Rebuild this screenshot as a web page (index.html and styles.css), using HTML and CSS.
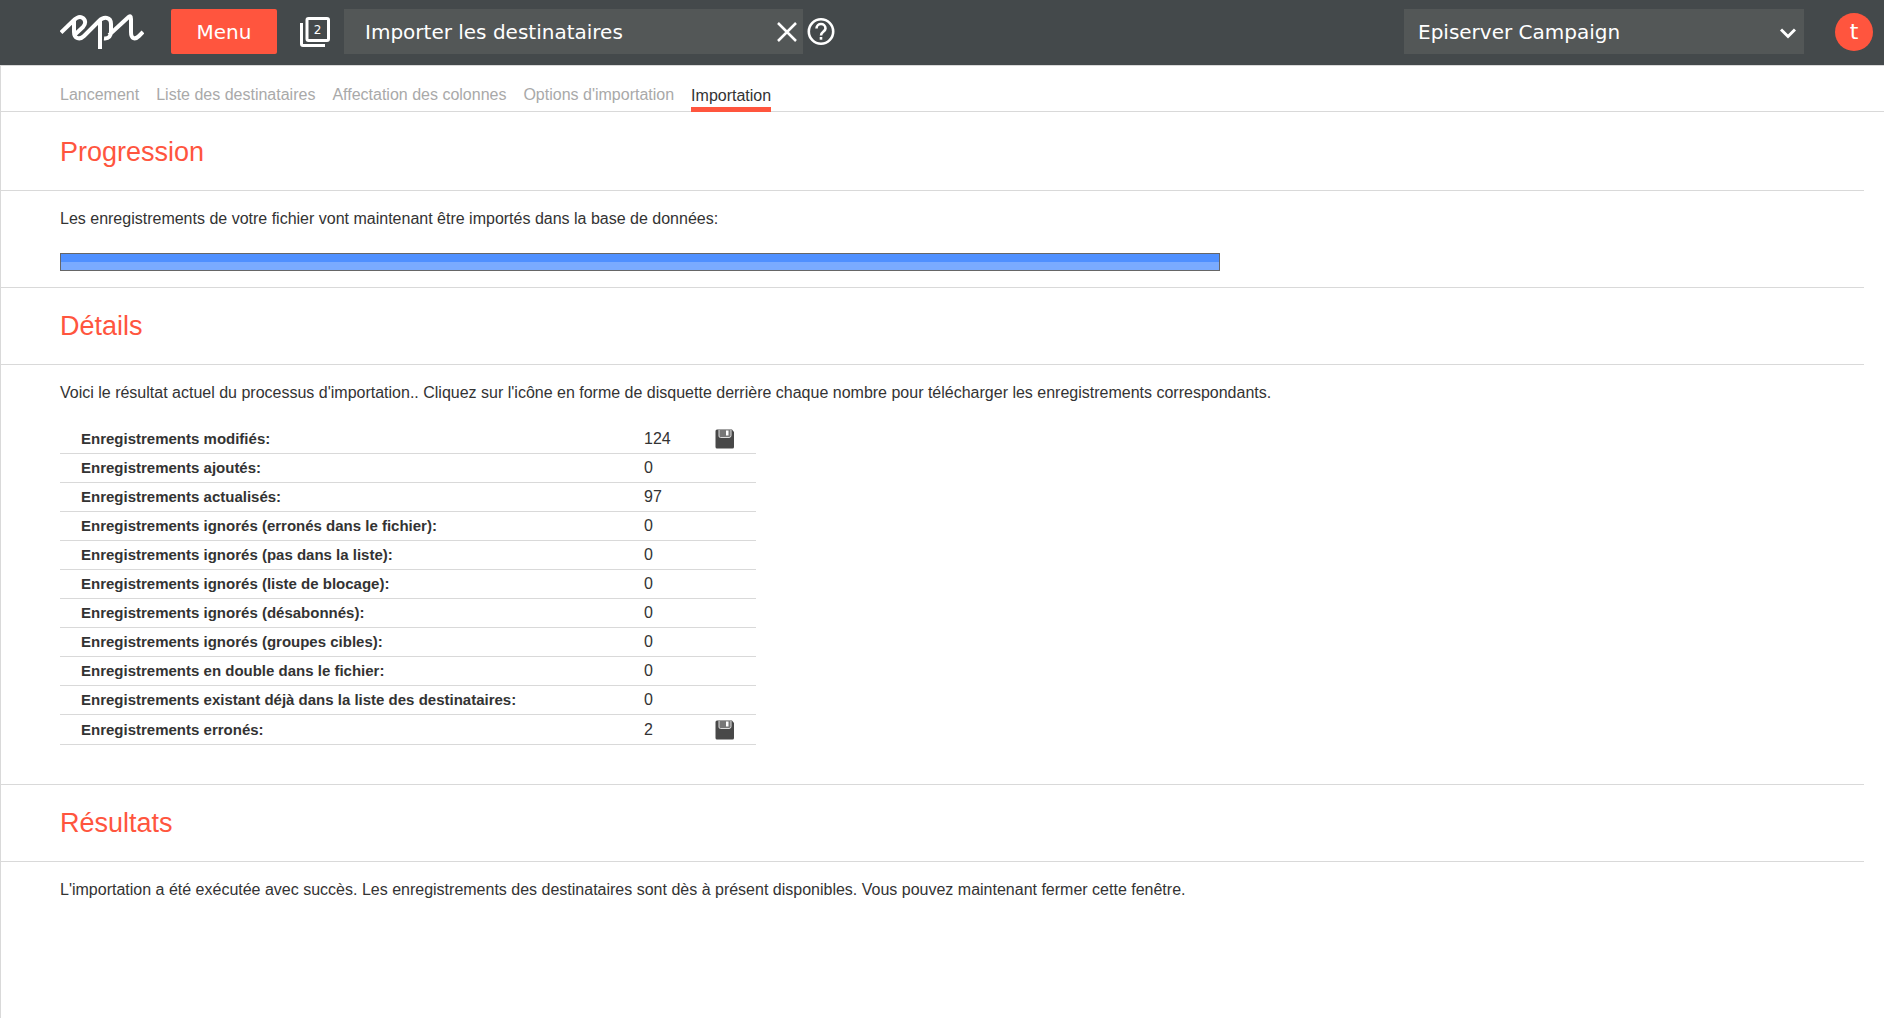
FILE: index.html
```html
<!DOCTYPE html>
<html lang="fr">
<head>
<meta charset="utf-8">
<meta name="viewport" content="width=device-width, initial-scale=1">
<title>Importer les destinataires</title>
<link rel="stylesheet" href="styles.css">
</head>
<body>
<header class="topbar">
  <a class="logo" href="#" aria-label="epi">
    <svg width="84" height="36" viewBox="0 0 84 36" fill="none" stroke="#fff" stroke-width="4">
      <path d="M1 18.500 L13 7 C16 4 19 2 22 3.500 C26 5.500 26 10 23 13 L15 20.500 M14 6.500 V18 C14 25 20 26 24 22 L39 7 C44 2 51 3 51 10 V17 C51 22 49 25 44 24.500 M40 6 V35 M49 21 L68 3.500 C70 1.500 71 2 71 5 V18 C71 25 75 26 79 22 L83 18"/>
    </svg>
  </a>
  <button class="menu" type="button">Menu</button>
  <button class="icon-button windows" type="button" aria-label="Fenêtres ouvertes">
    <svg width="30" height="30" viewBox="0 0 30 30" fill="none" stroke="#fff" stroke-width="3">
      <rect x="7" y="1.500" width="21.500" height="22" rx="1.500"/>
      <path d="M1.500 6 V27 Q1.500 28.500 3 28.500 H25"/>
    </svg>
    <span class="count">2</span>
  </button>
  <div class="window-title">
    <span>Importer les destinataires</span>
    <button class="icon-button" type="button" aria-label="Fermer">
      <svg width="20" height="20" viewBox="0 0 20 20" fill="none" stroke="#fff" stroke-width="2.500"><path d="M1 1 L19 19 M19 1 L1 19"/></svg>
    </button>
  </div>
  <button class="icon-button" type="button" aria-label="Aide">
    <svg width="28" height="28" viewBox="0 0 28 28" fill="none" stroke="#fff" stroke-width="2.600">
      <circle cx="14" cy="13.500" r="12.200"/>
      <path d="M9.500 10.500 C9.500 4.500 18.500 4.500 18.500 10.500 C18.500 13.500 14 13.500 14 17.500"/>
      <path d="M14 19 V21.700"/>
    </svg>
  </button>
  <div class="client">
    <select aria-label="Client"><option>Episerver Campaign</option></select>
    <svg class="chevron" width="16" height="11" viewBox="0 0 16 11" fill="none" stroke="#fff" stroke-width="3"><path d="M1 1.500 L8 8.500 L15 1.500"/></svg>
  </div>
  <button class="avatar" type="button">t</button>
</header>
<main class="page">
  <nav class="steps">
    <a href="#">Lancement</a>
    <a href="#">Liste des destinataires</a>
    <a href="#">Affectation des colonnes</a>
    <a href="#">Options d'importation</a>
    <a href="#" class="current" aria-current="step">Importation</a>
  </nav>
  <section class="panel">
    <h2>Progression</h2>
    <div class="body">
      <p id="progress-label">Les enregistrements de votre fichier vont maintenant être importés dans la base de données:</p>
      <progress max="100" value="100" aria-labelledby="progress-label"></progress>
    </div>
  </section>
  <section class="panel">
    <h2>Détails</h2>
    <div class="body details">
      <p>Voici le résultat actuel du processus d'importation.. Cliquez sur l'icône en forme de disquette derrière chaque nombre pour télécharger les enregistrements correspondants.</p>
      <table>
        <tr class="download"><th scope="row">Enregistrements modifiés:</th><td>124</td><td class="action"><button class="icon-button" type="button" aria-label="Télécharger les enregistrements modifiés"><svg width="20" height="20" viewBox="0 0 20 20"><path fill="#484848" d="M2 0.500 H17 L19 3 V18 Q19 19.500 17.500 19.500 H2 Q0.500 19.500 0.500 18 V2 Q0.500 0.500 2 0.500Z"/><path fill="#777" stroke="#ddd" d="M4 1 V7 Q4 8.500 5.500 8.500 H14 Q16 8.500 16 6.500 V1"/><path fill="#fff" d="M11 1.500 H13.500 V6.500 H11Z"/></svg></button></td></tr>
        <tr><th scope="row">Enregistrements ajoutés:</th><td>0</td><td></td></tr>
        <tr><th scope="row">Enregistrements actualisés:</th><td>97</td><td></td></tr>
        <tr><th scope="row">Enregistrements ignorés (erronés dans le fichier):</th><td>0</td><td></td></tr>
        <tr><th scope="row">Enregistrements ignorés (pas dans la liste):</th><td>0</td><td></td></tr>
        <tr><th scope="row">Enregistrements ignorés (liste de blocage):</th><td>0</td><td></td></tr>
        <tr><th scope="row">Enregistrements ignorés (désabonnés):</th><td>0</td><td></td></tr>
        <tr><th scope="row">Enregistrements ignorés (groupes cibles):</th><td>0</td><td></td></tr>
        <tr><th scope="row">Enregistrements en double dans le fichier:</th><td>0</td><td></td></tr>
        <tr><th scope="row">Enregistrements existant déjà dans la liste des destinataires:</th><td>0</td><td></td></tr>
        <tr class="download"><th scope="row">Enregistrements erronés:</th><td>2</td><td class="action"><button class="icon-button" type="button" aria-label="Télécharger les enregistrements erronés"><svg width="20" height="20" viewBox="0 0 20 20"><path fill="#484848" d="M2 0.500 H17 L19 3 V18 Q19 19.500 17.500 19.500 H2 Q0.500 19.500 0.500 18 V2 Q0.500 0.500 2 0.500Z"/><path fill="#777" stroke="#ddd" d="M4 1 V7 Q4 8.500 5.500 8.500 H14 Q16 8.500 16 6.500 V1"/><path fill="#fff" d="M11 1.500 H13.500 V6.500 H11Z"/></svg></button></td></tr>
      </table>
    </div>
  </section>
  <section class="panel">
    <h2>Résultats</h2>
    <div class="body">
      <p>L'importation a été exécutée avec succès. Les enregistrements des destinataires sont dès à présent disponibles. Vous pouvez maintenant fermer cette fenêtre.</p>
    </div>
  </section>
</main>
</body>
</html>
```
FILE: styles.css
```css
* { box-sizing: border-box; }

body {
  margin: 0;
  min-height: 100vh;
  display: flex;
  flex-direction: column;
  background: #fff;
  color: #333;
  font: 16px/20px "Liberation Sans", Arial, sans-serif;
}

.topbar {
  display: flex;
  align-items: center;
  height: 65px;
  padding: 0 11px 2px 60px;
  background: #44494b;
  color: #fff;
  font: 20px/24px "DejaVu Sans", Verdana, sans-serif;
}

.logo { display: flex; margin-right: 27px; }

button, select { font: inherit; color: inherit; border: 0; cursor: pointer; }

.menu {
  width: 106px;
  height: 45px;
  border-radius: 2px;
  background: #ff553e;
}

.icon-button {
  display: flex;
  padding: 0;
  background: none;
}

.windows { position: relative; margin: 0 14px 0 23px; }

.count {
  position: absolute;
  inset: 0 0 4px 5px;
  font-size: 12px;
  line-height: 26px;
}

.window-title {
  display: flex;
  align-items: center;
  justify-content: space-between;
  width: 459px;
  height: 45px;
  margin-right: 4px;
  padding: 0 6px 0 21px;
  background: #535757;
}

.client { position: relative; width: 400px; margin-left: auto; }

.client select {
  display: block;
  width: 100%;
  height: 45px;
  padding: 0 40px 0 14px;
  appearance: none;
  border-radius: 0;
  background: #535757;
}

.chevron { position: absolute; right: 8px; top: 19px; pointer-events: none; }

.avatar {
  width: 38px;
  height: 38px;
  margin-left: 31px;
  padding: 0;
  border-radius: 50%;
  background: #ff553e;
  font-size: 22px;
}

.page {
  flex: 1;
  border-top: 1px solid #d9d9d9;
  border-left: 1px solid #d9d9d9;
}

.steps {
  display: flex;
  align-items: flex-end;
  gap: 17px;
  height: 46px;
  margin-bottom: 2px;
  padding-left: 59px;
  border-bottom: 1px solid #d9d9d9;
}

.steps a {
  margin-bottom: 6px;
  color: #a9a9a9;
  text-decoration: none;
}

.steps .current {
  margin-bottom: -1px;
  padding-bottom: 1px;
  border-bottom: 5px solid #ff553e;
  color: #333;
}

.panel { margin-right: 20px; }
.panel + .panel { border-top: 1px solid #d9d9d9; }

h2 {
  margin: 0;
  padding: 22px 0 22px 59px;
  border-bottom: 1px solid #d9d9d9;
  color: #ff553e;
  font-size: 27px;
  font-weight: 400;
  line-height: 32px;
}

.body { padding: 18px 0 16px 59px; }
.details { padding-bottom: 39px; }

p { margin: 0; }

progress {
  display: block;
  width: 1160px;
  max-width: 100%;
  height: 18px;
  margin-top: 24px;
  border: 1px solid #666;
  appearance: none;
}

progress::-webkit-progress-bar { background: #fff; }
progress::-webkit-progress-value { background: linear-gradient(#4f90ff 50%, #7aabff 50%); }

table {
  width: 696px;
  margin-top: 21px;
  border-collapse: separate;
  border-spacing: 0;
}

th, td {
  height: 29px;
  padding: 0;
  border-bottom: 1px solid #d9d9d9;
  text-align: left;
}

.download th, .download td { height: 30px; }

th { padding-left: 21px; font-size: 15px; }
td { width: 71px; }
td.action, td:last-child { width: 41px; }
```
